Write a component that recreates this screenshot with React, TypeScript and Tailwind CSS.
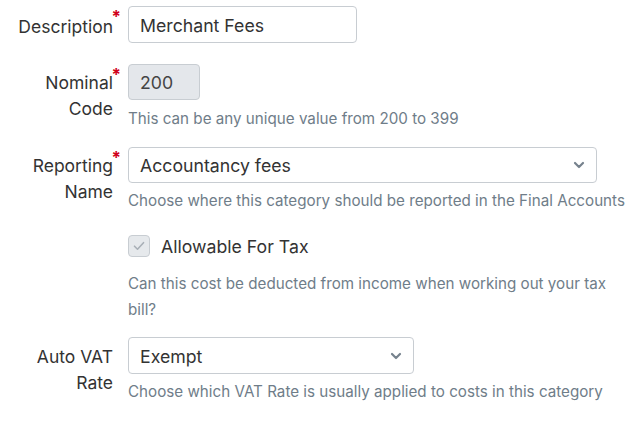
import React from "react";

function Label({ text, required, pt = "pt-[7px]" }: { text: React.ReactNode; required?: boolean; pt?: string }) {
  return (
    <div className={`relative w-[113px] shrink-0 ${pt} text-right text-[17.5px] leading-[26px] text-[#333]`}>
      {text}
      {required ? (
        <span className="absolute -right-[8px] top-[3px] text-[17px] leading-none font-bold text-[#d0021b]">*</span>
      ) : null}
    </div>
  );
}

function Help({ children, className = "" }: { children: React.ReactNode; className?: string }) {
  return <p className={`text-[15.2px] leading-[26px] text-[#6f7d89] ${className}`}>{children}</p>;
}

function Chevron() {
  return (
    <svg width="12" height="8" viewBox="0 0 12 8" className="absolute right-[11px] top-1/2 -translate-y-1/2">
      <path d="M2 2l4 4 4-4" fill="none" stroke="#76828d" strokeWidth="2.2" strokeLinecap="round" strokeLinejoin="round" />
    </svg>
  );
}

export default function App() {
  return (
    <div className="h-[424px] w-[632px] bg-white pt-[6px] font-['Inter',sans-serif]">
      {/* Description */}
      <div className="flex gap-[15px]">
        <Label text="Description" required pt="pt-[8px]" />
        <div className="flex h-[37px] w-[229px] items-center rounded-[4px] border border-[#c8cdd2] px-[11px] pt-[3px] text-[17.7px] text-[#333]">
          Merchant Fees
        </div>
      </div>

      {/* Nominal code */}
      <div className="mt-[21px] flex gap-[15px]">
        <Label text={<>Nominal<br />Code</>} required pt="pt-[6px]" />
        <div className="flex-1">
          <div className="flex h-[36px] w-[72px] items-center rounded-[4px] border border-[#c8cdd2] bg-[#e4e7eb] px-[11px] pt-[3px] text-[17.7px] text-[#444]">
            200
          </div>
          <Help className="mt-[6px]">This can be any unique value from 200 to 399</Help>
        </div>
      </div>

      {/* Reporting name */}
      <div className="mt-[15px] flex gap-[15px]">
        <Label text={<>Reporting<br />Name</>} required pt="pt-[6px]" />
        <div className="w-[500px]">
          <div className="relative flex h-[36px] w-[469px] items-center rounded-[4px] border border-[#c8cdd2] px-[11px] pt-[3px] text-[17.7px] text-[#333]">
            Accountancy fees
            <Chevron />
          </div>
          <Help className="mt-[5px]">Choose where this category should be reported in the Final Accounts</Help>

          <div className="mt-[21px] flex h-[22px] items-center gap-[11px]">
            <div className="flex h-[22px] w-[22px] items-center justify-center rounded-[4px] border border-[#c8cdd2] bg-[#e6e9ec]">
              <svg width="12" height="10" viewBox="0 0 12 10">
                <path d="M1.5 5.2l3 3 6-6.5" fill="none" stroke="#a9b0b7" strokeWidth="1.6" strokeLinecap="round" strokeLinejoin="round" />
              </svg>
            </div>
            <span className="pt-[1px] text-[17.7px] leading-[22px] text-[#333]">Allowable For Tax</span>
          </div>
          <Help className="mt-[14px] w-[490px]">
            Can this cost be deducted from income when working out your tax bill?
          </Help>
        </div>
      </div>

      {/* Auto VAT */}
      <div className="mt-[14px] flex gap-[15px]">
        <Label text={<>Auto VAT<br />Rate</>} />
        <div className="flex-1">
          <div className="relative flex h-[37px] w-[286px] items-center rounded-[4px] border border-[#c8cdd2] px-[11px] pt-[3px] text-[17.7px] text-[#333]">
            Exempt
            <Chevron />
          </div>
          <Help className="mt-[5px]">Choose which VAT Rate is usually applied to costs in this category</Help>
        </div>
      </div>
    </div>
  );
}
